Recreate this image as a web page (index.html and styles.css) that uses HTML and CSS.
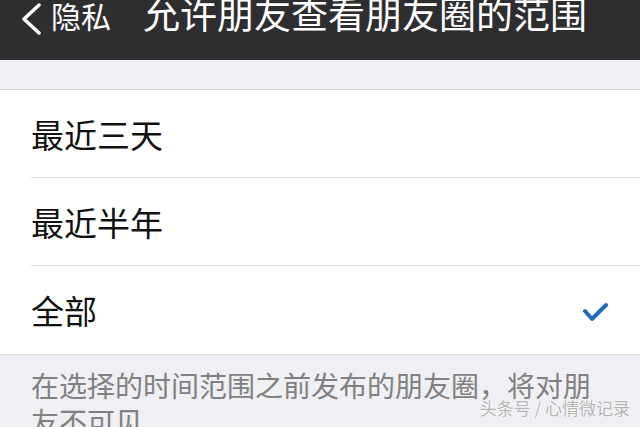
FILE: index.html
```html
<!DOCTYPE html>
<html lang="zh-CN">

<head>
    <meta charset="UTF-8">
    <meta name="viewport" content="width=device-width, initial-scale=1.0">
    <title>允许朋友查看朋友圈的范围</title>
    <link rel="stylesheet" href="styles.css">
</head>

<body>
    <div class="page">
        <header class="nav">
            <a class="back" href="#">
                <svg class="back-icon" width="24" height="32" viewBox="0 0 24 32">
                    <path d="M20 2 L5 16 L20 30" fill="none" stroke="#fff" stroke-width="3.5" stroke-linecap="round" stroke-linejoin="round" />
                </svg>
                <span>隐私</span>
            </a>
            <h1 class="title">允许朋友查看朋友圈的范围</h1>
        </header>

        <div class="gap"></div>

        <ul class="options">
            <li class="option">最近三天</li>
            <li class="option">最近半年</li>
            <li class="option selected">全部
                <svg class="check" width="26" height="20" viewBox="0 0 26 20">
                    <path d="M3 9 L10 17 L24 3" fill="none" stroke="#1f6db5" stroke-width="4" stroke-linecap="round" stroke-linejoin="round" />
                </svg>
            </li>
        </ul>

        <p class="note">在选择的时间范围之前发布的朋友圈，将对朋友不可见</p>

        <!-- 水印 -->
        <div class="mark">头条号 / 心情微记录</div>
    </div>
</body>

</html>
```

FILE: styles.css
```css
* {
    box-sizing: border-box;
}

body {
    margin: 0;
    background: #efeff4;
    font-family: "Noto Sans CJK SC", "Noto Sans", sans-serif;
}

.page {
    position: relative;
    width: 640px;
    height: 427px;
    overflow: hidden;
}

.nav {
    display: flex;
    align-items: flex-start;
    height: 60px;
    background: #2e2e31;
    color: #fff;
}

.back {
    display: flex;
    align-items: flex-start;
    color: #fff;
    text-decoration: none;
    font-size: 30px;
    line-height: 1;
    padding-left: 19px;
}

.back-icon {
    margin-top: 3px;
    margin-right: 8px;
}

.title {
    margin: -5px 0 0 32px;
    font-size: 37px;
    font-weight: 400;
    line-height: 1;
}

.gap {
    height: 30px;
    border-bottom: 1px solid #d8d8dc;
}

.options {
    list-style: none;
    margin: 0;
    padding: 0 0 0 31px;
    background: #fff;
    border-bottom: 1px solid #d8d8dc;
}

.option {
    display: flex;
    align-items: center;
    justify-content: space-between;
    height: 88px;
    padding-right: 32px;
    font-size: 33px;
    color: #111;
    border-bottom: 1px solid #dcdcdc;
}

.option:last-child {
    border-bottom: none;
}

.check {
    margin-top: 4px;
}

.note {
    margin: 0;
    padding: 12px 40px 0 31px;
    font-size: 28px;
    line-height: 36px;
    color: #808080;
}

.mark {
    position: absolute;
    right: 10px;
    bottom: 7px;
    font-size: 17px;
    color: #b4b4b4;
    text-shadow: 0 0 2px #fff, 0 0 1px #fff;
}
```
